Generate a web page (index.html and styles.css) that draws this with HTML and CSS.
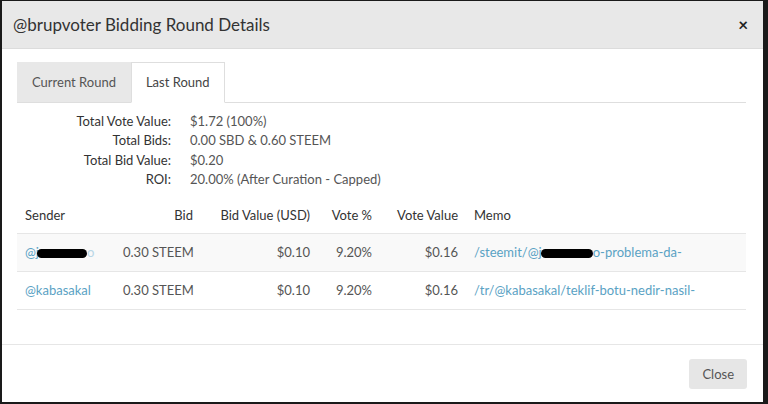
FILE: index.html
```html
<!DOCTYPE html>
<html>
<head>
<meta charset="utf-8">
<link rel="stylesheet" href="styles.css">
</head>
<body>
<div class="modal">
  <div class="modal-header">
    <h4 class="modal-title">@brupvoter Bidding Round Details</h4>
    <span class="close">&times;</span>
  </div>
  <div class="modal-body">
    <ul class="tabs">
      <li class="tab">Current Round</li>
      <li class="tab active">Last Round</li>
    </ul>
    <div class="info">
      <div class="label">Total Vote Value:</div><div class="value">$1.72 (100%)</div>
      <div class="label">Total Bids:</div><div class="value">0.00 SBD &amp; 0.60 STEEM</div>
      <div class="label">Total Bid Value:</div><div class="value">$0.20</div>
      <div class="label">ROI:</div><div class="value">20.00% (After Curation - Capped)</div>
    </div>
    <table class="bids">
      <colgroup>
        <col class="c-sender"><col class="c-bid"><col class="c-bidval"><col class="c-vote"><col class="c-voteval"><col class="c-memo">
      </colgroup>
      <thead>
        <tr><th>Sender</th><th class="r">Bid</th><th class="r">Bid Value (USD)</th><th class="r">Vote %</th><th class="r">Vote Value</th><th>Memo</th></tr>
      </thead>
      <tbody>
        <tr class="odd">
          <td><a class="link">@j<span class="redact r1"></span><span class="tail">o</span></a></td>
          <td class="r">0.30 STEEM</td><td class="r">$0.10</td><td class="r">9.20%</td><td class="r">$0.16</td>
          <td><a class="link">/steemit/@j<span class="redact r2"></span>o-problema-da-</a></td>
        </tr>
        <tr>
          <td><a class="link">@kabasakal</a></td>
          <td class="r">0.30 STEEM</td><td class="r">$0.10</td><td class="r">9.20%</td><td class="r">$0.16</td>
          <td><a class="link">/tr/@kabasakal/teklif-botu-nedir-nasil-</a></td>
        </tr>
      </tbody>
    </table>
  </div>
  <div class="modal-footer">
    <button class="btn">Close</button>
  </div>
</div>
</body>
</html>
```
FILE: styles.css
```css
html, body {
  margin: 0;
  padding: 0;
  height: 404px;
  overflow: hidden;
}
body {
  background: #1a1a1a;
  font-family: "Lato", "Open Sans", sans-serif;
  font-size: 13px;
  color: #333;
}
.modal {
  margin: 1px 5px 2px 2px;
  height: 401px;
  background: #fff;
  display: flex;
  flex-direction: column;
}
.modal-header {
  height: 47px;
  background: #e8e8e8;
  border-bottom: 1px solid #dcdcdc;
  display: flex;
  align-items: center;
  justify-content: space-between;
  padding: 0 15px 0 11px;
}
.modal-title {
  margin: 0;
  font-weight: 400;
  font-size: 17px;
  color: #333;
}
.close {
  font-size: 17px;
  font-weight: 700;
  color: #222;
  line-height: 1;
}
.modal-body {
  flex: 1;
  padding: 13px 17px 0 15px;
}
.tabs {
  list-style: none;
  margin: 0;
  padding: 0;
  display: flex;
  border-bottom: 1px solid #dedede;
}
.tab {
  height: 39px;
  line-height: 38px;
  padding: 0 14px;
  background: #e8e8e8;
  color: #555;
  font-size: 13px;
  margin-bottom: -1px;
  border: 1px solid transparent;
  border-bottom: 0;
}
.tab.active {
  background: #fff;
  color: #444;
  border: 1px solid #dedede;
  border-bottom: 1px solid #fff;
}
.info {
  display: grid;
  grid-template-columns: 154px auto;
  column-gap: 19px;
  margin-top: 9px;
  line-height: 19.4px;
}
.info .label {
  text-align: right;
  color: #333;
}
.info .value {
  color: #555;
}
.bids {
  width: 100%;
  border-collapse: collapse;
  table-layout: fixed;
  margin-top: 7px;
}
.c-sender { width: 98px; }
.c-bid { width: 86px; }
.c-bidval { width: 117px; }
.c-vote { width: 62px; }
.c-voteval { width: 86px; }
.bids th {
  font-weight: 400;
  text-align: left;
  height: 36px;
  padding: 0 8px;
  color: #333;
  border-bottom: 1px solid #e6e6e6;
  white-space: nowrap;
}
.bids td {
  height: 37px;
  padding: 0 8px;
  color: #555;
  border-bottom: 1px solid #e6e6e6;
  white-space: nowrap;
}
.bids .r { text-align: right; }
.bids tr.odd td { background: #f9f9f9; }
.link { color: #5aa2c4; text-decoration: none; }
.redact {
  display: inline-block;
  background: #000;
  border-radius: 6px;
  vertical-align: middle;
  height: 9px;
}
.r1 { width: 50px; margin-left: -2px; }
.r2 { width: 52px; margin-left: -1px; }
.tail { color: #b8d6e6; }
.modal-footer {
  height: 57px;
  border-top: 1px solid #e6e6e6;
  display: flex;
  align-items: center;
  justify-content: flex-end;
  padding: 0 16px;
}
.btn {
  font-family: inherit;
  font-size: 13px;
  color: #555;
  background: #e6e6e6;
  border: 0;
  border-radius: 3px;
  height: 30px;
  padding: 0 13px;
}
```
